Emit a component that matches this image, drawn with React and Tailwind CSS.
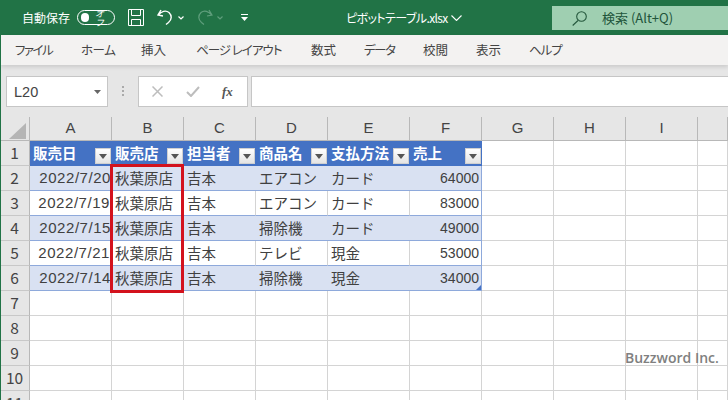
const jp = '"Noto Sans CJK JP", sans-serif';
const colWidths = 'grid-cols-[30px_82px_72px_72px_72px_82px_72px_72px_72px_72px_30px]';
const heads = ['A','B','C','D','E','F','G','H','I',''];
const headerRow = ['販売日','販売店','担当者','商品名','支払方法','売上'];
const rows = [
  ['2022/7/20','秋葉原店','吉本','エアコン','カード','64000'],
  ['2022/7/19','秋葉原店','吉本','エアコン','カード','83000'],
  ['2022/7/15','秋葉原店','吉本','掃除機','カード','49000'],
  ['2022/7/21','秋葉原店','吉本','テレビ','現金','53000'],
  ['2022/7/14','秋葉原店','吉本','掃除機','現金','34000'],
];
const tabs = [
  ['ファイル', 'w-[66px] tracking-[-1.5px]'],
  ['ホーム', 'w-[60px] tracking-[-0.5px]'],
  ['挿入', 'w-[55px]'],
  ['ページ レイアウト', 'w-[115px] tracking-[-1px]'],
  ['数式', 'w-[53px]'],
  ['データ', 'w-[59px] tracking-[-1.5px]'],
  ['校閲', 'w-[53px]'],
  ['表示', 'w-[53px]'],
  ['ヘルプ', 'w-[60px] tracking-[-1px]'],
];

function FilterButton() {
  return (
    <span className="absolute right-[1px] bottom-[1px] flex h-[16px] w-[16px] items-center justify-center bg-gradient-to-b from-white to-[#e4e4e4] border border-[#d0d0d0]">
      <svg width="8" height="5" viewBox="0 0 8 5"><path d="M0 0h8L4 5z" fill="#555" /></svg>
    </span>
  );
}

function RowHead({ n }) {
  return (
    <div className="flex h-[25px] items-center justify-center border-r border-b border-r-[#b8b8b8] border-b-[#c8c8c8] bg-[#e6e6e6] text-[15.5px] text-[#444]">{n}</div>
  );
}

function Gap() {
  return <div className="h-[25px] border-r border-b border-[#d4d4d4] bg-white" />;
}

export default function App() {
  return (
    <div className="relative h-[400px] w-[728px] overflow-hidden border-l border-l-[#217346] bg-white" style={{ fontFamily: jp }}>
      {/* title bar */}
      <div className="flex h-[35px] items-center bg-[#217346] text-white">
        <span className="ml-[21px] text-[12px]">自動保存</span>
        <span className="ml-[7px] flex h-[15px] w-[38px] items-center rounded-full border border-white px-[3px]">
          <span className="h-[9px] w-[9px] rounded-full bg-white" />
          <span className="ml-[6px] text-[9px] italic leading-none">オフ</span>
        </span>
        <svg className="ml-[13px]" width="16" height="17" viewBox="0 0 16 17" fill="none" stroke="white" strokeWidth="1"><path d="M.5.5h15v16H.5zM3.5.5v6h9v-6M3.5 16.5v-6h9v6" /></svg>
        <svg className="ml-[13px]" width="16" height="17" viewBox="0 0 16 17" fill="none" stroke="white" strokeWidth="1.4"><path d="M4 1 1 6l5 1M1.5 6C4 2 9 1 12 3.500c3 3 3 7-.5 10L9 15.500" /></svg>
        <svg className="ml-[5px]" width="6" height="4" viewBox="0 0 6 4" fill="none" stroke="white" strokeWidth="1.2"><path d="m.5.500 2.500 2.500 2.500-2.500" /></svg>
        <svg className="ml-[13px]" width="16" height="17" viewBox="0 0 16 17" fill="none" stroke="#5f9e7c" strokeWidth="1.2"><path d="m12 1 3 5-5 1M14.500 6C12 2 7 1 4 3.500c-3 3-3 7 .5 10L7 15.500" /></svg>
        <svg className="ml-[4px]" width="6" height="4" viewBox="0 0 6 4" fill="none" stroke="#5f9e7c" strokeWidth="1.2"><path d="m.5.500 2.500 2.500 2.500-2.500" /></svg>
        <svg className="ml-[18px]" width="7" height="7" viewBox="0 0 7 7" fill="white"><path d="M0 0h7v1H0zM0 3h7L3.500 7z" /></svg>
        <span className="ml-[98px] w-[102px] whitespace-nowrap text-[12px] tracking-[-0.6px] [font-feature-settings:'palt']">ピボットテーブル.xlsx</span>
        <svg className="ml-[3px]" width="11" height="6" viewBox="0 0 11 6" fill="none" stroke="white" strokeWidth="1.1"><path d="m.5.500 5 5 5-5" /></svg>
        <div className="ml-auto flex h-[24px] w-[176px] items-center self-start mt-[6px] bg-[#9fcfb1] text-[#21543a]">
          <svg className="ml-[20px]" width="15" height="15" viewBox="0 0 15 15" fill="none" stroke="#24573c" strokeWidth="1.1"><circle cx="9.500" cy="5.500" r="4.800" /><path d="M6 9.500.7 14.500" /></svg>
          <span className="ml-[15px] text-[13px]">検索 (Alt+Q)</span>
        </div>
      </div>
      {/* tabs */}
      <div className="relative flex h-[30px] items-center bg-[#f3f2f1] pl-[14px] text-[12.5px] text-[#444] shadow-[0_2px_4px_rgba(0,0,0,0.12)] [font-feature-settings:'palt']">
        {tabs.map(([t, c]) => <span key={t} className={`whitespace-nowrap ${c}`}>{t}</span>)}
      </div>
      {/* formula bar */}
      <div className="flex h-[52px] items-start bg-[#e6e6e6] pt-[11px]">
        <div className="ml-[5px] flex h-[31px] w-[102px] items-center justify-between border border-[#c6c6c6] bg-white pl-[7px] pr-[6px]">
          <span className="pt-[3px] text-[14.5px] text-[#444]" style={{ fontFamily: '"Liberation Sans", sans-serif' }}>L20</span>
          <svg width="7" height="4" viewBox="0 0 7 4"><path d="M0 0h7L3.500 4z" fill="#666" /></svg>
        </div>
        <div className="ml-[14px] mt-[10px] flex flex-col gap-[2px]">
          <span className="h-[2px] w-[2px] bg-[#aaa]" />
          <span className="h-[2px] w-[2px] bg-[#aaa]" />
          <span className="h-[2px] w-[2px] bg-[#aaa]" />
        </div>
        <div className="ml-[14px] flex h-[31px] w-[110px] items-center border border-[#c6c6c6] bg-white">
          <svg className="ml-[13px]" width="11" height="11" viewBox="0 0 11 11" stroke="#bdbdbd" strokeWidth="1.500"><path d="m.5.500 10 10M10.500.500l-10 10" /></svg>
          <svg className="ml-[23px]" width="14" height="11" viewBox="0 0 14 11" fill="none" stroke="#bdbdbd" strokeWidth="2"><path d="m1 6 4 4 8-9" /></svg>
          <span className="ml-[22px] font-bold italic text-[13px] text-[#555]" style={{ fontFamily: '"Liberation Serif", serif' }}>fx</span>
        </div>
        <div className="ml-[3px] h-[31px] flex-1 border-y border-l border-[#c6c6c6] bg-white" />
      </div>
      {/* sheet */}
      <div className={`relative grid ${colWidths} -ml-px`}>
        <div className="relative h-[24px] border-r border-b border-r-[#b8b8b8] border-b-[#b8b8b8] bg-[#e6e6e6]">
          <svg className="absolute left-[9px] top-[6px]" width="17" height="16" viewBox="0 0 17 16"><path d="M17 0v16H0z" fill="#b5b5b5" /></svg>
        </div>
        {heads.map((h, i) => (
          <div key={i} className="flex h-[24px] items-center justify-center border-r border-b border-r-[#b8b8b8] border-b-[#b8b8b8] bg-[#e6e6e6] text-[15px] text-[#444]" style={{ fontFamily: '"Liberation Sans", sans-serif' }}>{h}</div>
        ))}

        <RowHead n="1" />
        {headerRow.map((h, i) => (
          <div key={h} className="relative flex h-[25px] items-center overflow-hidden border-b border-b-[#4472c4] bg-[#4472c4] pl-[3px] text-[14.5px] font-bold leading-none text-white">
            {h}
            <FilterButton />
          </div>
        ))}
        <Gap /><Gap /><Gap /><Gap />

        {rows.map((r, ri) => {
          const band = ri % 2 === 0;
          return [
            <RowHead key={`h${ri}`} n={String(ri + 2)} />,
            ...r.map((c, ci) => (
              <div
                key={`${ri}-${ci}`}
                className={`relative flex h-[25px] items-center overflow-hidden whitespace-nowrap border-b border-b-[#8ea9db] text-[#404040] ${band ? 'bg-[#d9e1f2]' : 'bg-white'} ${ci === 5 ? 'border-r border-r-[#8ea9db]' : band ? '' : 'border-r border-r-[#d4d4d4]'} ${ci === 0 ? 'justify-end pr-[1px] text-[15px] tracking-[0.55px]' : ci === 5 ? 'justify-end pr-[2px] text-[14px]' : 'pl-[3px] text-[14.5px]'}`}
                style={ci === 0 || ci === 5 ? { fontFamily: '"Liberation Sans", sans-serif' } : undefined}
              >
                {c}
                {ri === 4 && ci === 5 && <svg className="absolute right-0 bottom-0" width="5" height="5" viewBox="0 0 5 5"><path d="M5 0v5H0z" fill="#4472c4" /></svg>}
              </div>
            )),
            <Gap key={`a${ri}`} />, <Gap key={`b${ri}`} />, <Gap key={`c${ri}`} />, <Gap key={`d${ri}`} />,
          ];
        })}

        {[7, 8, 9, 10, 11].map(n => [
          <RowHead key={n} n={String(n)} />,
          ...Array.from({ length: 10 }, (_, i) => <Gap key={`${n}-${i}`} />),
        ])}

        {/* selection outline */}
        <div className="absolute left-[110px] top-[47px] h-[129px] w-[74px] border-[3px] border-[#d3121d]" />
      </div>
      <div className="absolute left-[624px] top-[347px] text-[14px] font-semibold text-[#808080]" style={{ fontFamily: '"Open Sans", sans-serif' }}>Buzzword Inc.</div>
    </div>
  );
}
